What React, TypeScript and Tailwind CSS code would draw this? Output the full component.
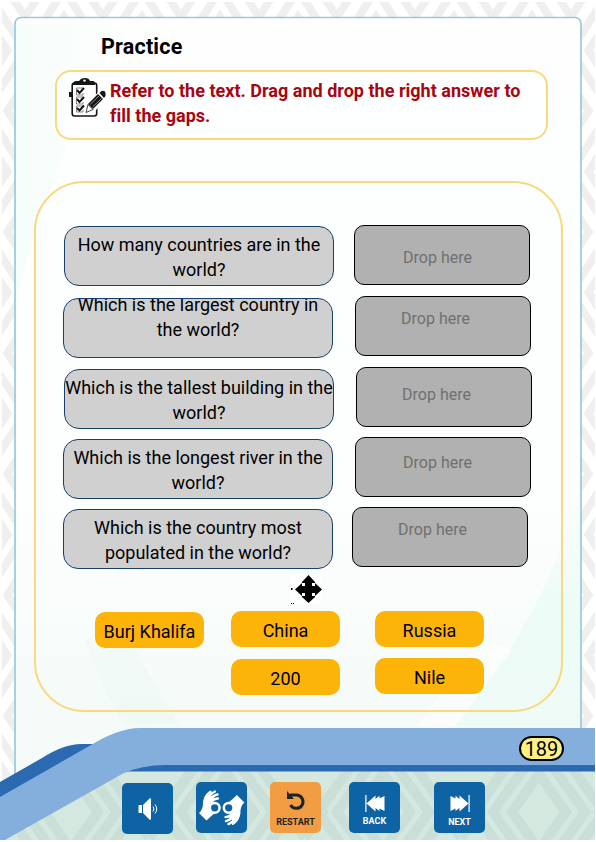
import React from "react";

const questions = [
  { text: ["How many countries are in the", "world?"], box: "ml-[10px] mt-0", pad: "pt-[5px]" },
  { text: ["Which is the largest country in", "the world?"], box: "ml-[9px] mt-3", pad: "-mt-[7px]" },
  { text: ["Which is the tallest building in the", "world?"], box: "ml-[10px] mt-[11px]", pad: "pt-[5px]" },
  { text: ["Which is the longest river in the", "world?"], box: "ml-[9px] mt-[10px]", pad: "pt-[5px]" },
  { text: ["Which is the country most", "populated in the world?"], box: "ml-[9px] mt-[10px]", pad: "pt-[5px]" },
];

const drops = [
  { box: "ml-[2px] mt-0", pad: "pt-[22px] pr-[9px]" },
  { box: "ml-[3px] mt-[11px]", pad: "pt-[12px] pr-[15px]" },
  { box: "ml-[4px] mt-[11px]", pad: "pt-[17px] pr-[15px]" },
  { box: "ml-[3px] mt-[10px]", pad: "pt-[15px] pr-[11px]" },
  { box: "ml-0 mt-[10px]", pad: "pt-[12px] pr-[15px]" },
];

function Backdrop() {
  return (
    <svg className="absolute inset-0" width="596" height="842" viewBox="0 0 596 842">
      <defs>
        <pattern id="weave" x="337" y="-10" width="78" height="121" patternUnits="userSpaceOnUse">
          <g fill="none" stroke="#efefef" strokeWidth="8">
            <path d="M39 0L78 60.5L39 121L0 60.5Z" />
            <path d="M39 27L60.5 60.5L39 94L17.5 60.5Z" />
            <path d="M-21 60.5L0 94L21.5 127M99 60.5L78 94L56.5 127M-21 60.5L0 27L21.5 -6M99 60.5L78 27L56.5 -6" />
          </g>
        </pattern>
        <pattern id="weaveGreen" x="-7" y="752" width="156" height="121" patternUnits="userSpaceOnUse">
          <g fill="none" stroke="#cadfd7" strokeWidth="10">
            <path d="M78 -30L143 60L78 150L13 60Z" />
            <path d="M78 -4L124 60L78 124L32 60Z" />
            <path d="M78 22L105 60L78 98L51 60Z" />
            <path d="M0 34L18 60L0 86M156 34L138 60L156 86" />
          </g>
        </pattern>
        <linearGradient id="page" x1="0" y1="0" x2="0" y2="1">
          <stop offset="0" stopColor="#fefefe" />
          <stop offset="0.6" stopColor="#fdfefe" />
          <stop offset="0.85" stopColor="#f5fbf9" />
          <stop offset="1" stopColor="#f3faf7" />
        </linearGradient>
        <linearGradient id="mint" x1="0" y1="0" x2="0" y2="1">
          <stop offset="0" stopColor="#fbfefd" />
          <stop offset="0.5" stopColor="#edfcf6" />
          <stop offset="1" stopColor="#eefaf6" />
        </linearGradient>
        <linearGradient id="corner" x1="0" y1="0" x2="1" y2="0">
          <stop offset="0" stopColor="#f5fdfa" />
          <stop offset="1" stopColor="#fefefe" />
        </linearGradient>
      </defs>
      <rect width="596" height="842" fill="white" />
      <rect x="2" y="2" width="593" height="800" fill="url(#weave)" />
      <rect x="15" y="17.5" width="566" height="800" rx="6" fill="url(#page)" stroke="#9bc9d4" strokeWidth="1.7" />
      <path d="M16 24H130Q60 130 16 300Z" fill="url(#corner)" />
      <path d="M580 480Q556 590 490 677L455 727H580Z" fill="url(#mint)" />
      <path d="M512 650L455 727H416L480 640Z" fill="white" opacity=".6" />
      <path d="M85 640Q103 690 125 727H180L130 640Z" fill="#eef9f4" opacity=".6" />
      <path d="M0 839L128 768H595V840H0Z" fill="#d4e8e0" />
      <path d="M0 839L128 768H595V840H0Z" fill="url(#weaveGreen)" />
      <path d="M0 782L42 758Q64 744 81 744H150V765L0 807Z" fill="#2b6ab0" />
      <path d="M125 771.5Q145 764 165 764H595V771.5Z" fill="#2b6ab0" />
      <path d="M0 797L91 745Q119 728 140 728H595V765H165Q142 765 123 773.5L5 840H0Z" fill="#84aedc" />
    </svg>
  );
}

function Checklist() {
  return (
    <svg className="mt-[5px] shrink-0" width="37" height="41" viewBox="0 0 37 41">
      <rect x="3.2" y="6" width="24.5" height="33" rx="2.5" fill="white" stroke="#151515" strokeWidth="1.6" />
      <path d="M4 8Q4 4 7 4H10Q12 1 16 1T21 4H24Q26 4 26 8Z" fill="#151515" />
      <circle cx="15.5" cy="3.6" r="1.2" fill="white" />
      <path d="M0 15H3V20H0Z" fill="#151515" />
      <g fill="none" stroke="#151515">
        <path d="M14 11H7.5V18H14V16M14 20H7.5V27H14V25M14 29H7.5V35H14V33" stroke="#888" strokeWidth="1" />
        <path d="M8 13L10.5 16L15 11M8 22L10.5 25L15 20M8 31L10.5 33.5L15 28.5" strokeWidth="2" />
      </g>
      <path d="M17 36L19 27L31 15L36 20L25 34Z" fill="white" stroke="white" strokeWidth="2" />
      <path d="M17 35.5L19 27.5L24 32.5Z" fill="white" stroke="#151515" strokeWidth=".8" />
      <path d="M19 27L29 17L34 22L24 32Z" fill="#151515" />
      <path d="M30.5 16L32.5 14Q36 13 36.5 16V19L35 21Z" fill="#151515" />
      <path d="M21 27.5L30 19M23.5 30L32.5 21.5" stroke="#aaa" strokeWidth=".8" />
    </svg>
  );
}

function Hand({ transform }: { transform?: string }) {
  return (
    <g transform={transform}>
      <path d="M3 31Q7.5 27 7 20Q8 14 11.5 11L20 17L14 22V29Q15 31 19 31Q15 34 10.5 38.5Z" fill="white" />
      <g fill="none" stroke="white" strokeLinecap="round" strokeWidth="2.3">
        <path d="M8.5 20Q9.5 13 14.5 9.8M11 19Q13.5 12 19 9.5M13 20Q16 13.5 21.5 12.5M15 20Q18 16.5 22 16.5" />
        <circle cx="18.7" cy="25.8" r="4.9" strokeWidth="2.5" />
      </g>
    </g>
  );
}

function Answer({ children, className = "" }: { children: React.ReactNode; className?: string }) {
  return (
    <button className={`h-9 w-[109px] shrink-0 whitespace-nowrap rounded-[10px] bg-[#fdb409] text-center text-[18px] leading-[39px] ${className}`}>
      {children}
    </button>
  );
}

function SkipIcon({ flip = false }: { flip?: boolean }) {
  return (
    <svg className={flip ? "-scale-x-100" : ""} width="20" height="17" viewBox="0 0 20 17" fill="white">
      <path d="M.3 0H1.5V17H.3ZM1.5 8.5L10.5 .6V4L14.5 .8V3.5L19.5 1V16L14.5 13.5V16L10.5 13V16.4Z" />
    </svg>
  );
}

export default function App() {
  return (
    <div className="relative h-[842px] w-[596px] overflow-hidden bg-white font-['Roboto','Liberation_Sans',sans-serif] text-black">
      <Backdrop />
      <div className="relative flex h-[842px] flex-col">
        <h1 className="ml-[101px] mt-[33px] h-[37px] text-[21.5px] font-bold leading-[28px] tracking-[0.2px]">Practice</h1>
        <section className="ml-[55px] flex h-[70px] w-[493px] shrink-0 rounded-[16px] border-2 border-[#f8d97d] bg-white/60 pl-3">
          <Checklist />
          <p className="ml-1 mt-[6px] whitespace-nowrap text-[18px] font-bold leading-[25px] tracking-[0.02px] text-[#a80510]">
            Refer to the text. Drag and drop the right answer to
            <br />
            fill the gaps.
          </p>
        </section>
        <main className="ml-[34px] mt-[41px] h-[531px] w-[529px] shrink-0 rounded-[50px] border-2 border-[#f8d97d] px-[18px] pt-[42px]">
          <div className="flex">
            <div className="mt-px w-[298px]">
              {questions.map((q) => (
                <div key={q.text[0]} className={`h-[60px] w-[270px] overflow-hidden rounded-[15px] border border-[#18406c] bg-[#d0d0d0] ${q.box}`}>
                  <div className={`flex flex-col items-center whitespace-nowrap text-[18px] leading-[25px] ${q.pad}`}>
                    {q.text.map((line) => (
                      <span key={line}>{line}</span>
                    ))}
                  </div>
                </div>
              ))}
            </div>
            <div>
              {drops.map((d, i) => (
                <div key={i} className={`h-[60px] w-[176px] rounded-[10px] border border-black bg-[#b1b1b1] text-center text-[16px] leading-[20px] text-[#707070] ${d.box} ${d.pad}`}>
                  Drop here
                </div>
              ))}
            </div>
          </div>
          <svg className="ml-[237px] mt-[5px]" width="31" height="31" viewBox="0 0 31 31">
            <rect width="30" height="30" fill="white" />
            <path d="M0 14H1.5V16H0ZM0 29H1V30H0ZM2 29H3V30H2Z" />
            <path d="M17.5 1L24 8H20V12H24V9L31 15.5L24 22V19H20V23H24L17.5 29L11 23H15V19H11V22L4 15.5L11 9V12H15V8H11Z" />
            <path d="M11 8H24V23H11Z" />
            <path d="M11 9H14V12H11ZM21 9H24V12H21ZM11 19H14V22H11ZM21 19H24V22H21Z" fill="white" />
          </svg>
          <div className="ml-[41px] mt-[6px] flex">
            <Answer className="mt-px">Burj Khalifa</Answer>
            <Answer className="ml-[27px]">China</Answer>
            <Answer className="ml-[35px]">Russia</Answer>
          </div>
          <div className="ml-[177px] mt-[10px] flex">
            <Answer className="mt-px">200</Answer>
            <Answer className="ml-[35px]">Nile</Answer>
          </div>
        </main>
        <div className="ml-[519px] mt-[24px] flex h-[25px] w-[45px] shrink-0 items-center justify-center rounded-full border-2 border-black bg-[#fff082] text-[20px] leading-none">189</div>
        <nav className="ml-[122px] mt-[21px] flex text-[9px] font-bold leading-[10px]">
          <button className="mt-px flex h-[51px] w-[51px] items-center justify-center rounded-[5px] bg-[#0e63a4]">
            <svg width="22" height="22" viewBox="0 0 22 22">
              <path d="M1.5 7H5V15H1.5ZM6 7L13 0Q14 0 14 2V20Q14 22 13 22L6 15Z" fill="white" />
              <path d="M16 8.5Q18 11 16 13.5M18 6.5Q21.5 11 18 15.5" fill="none" stroke="white" />
            </svg>
          </button>
          <button className="ml-[23px] h-[51px] w-[51px] rounded-[5px] bg-[#0e63a4]">
            <svg width="51" height="51" viewBox="0 0 51 51">
              <Hand />
              <Hand transform="rotate(180 25.7 25.8)" />
            </svg>
          </button>
          <button className="ml-[23px] flex h-[51px] w-[51px] flex-col items-center rounded-[5px] bg-[#f29c43] pt-[8px] text-[#1d2427]">
            <svg width="20" height="21" viewBox="0 0 20 21" fill="none" stroke="#1d2427" strokeWidth="3">
              <path d="M4 5H11A6.7 6.7 0 1 1 4.5 15" />
              <path d="M1 1V9H8Z" fill="#1d2427" stroke="none" />
            </svg>
            <span className="mt-[6px]">RESTART</span>
          </button>
          <button className="ml-[28px] flex h-[51px] w-[51px] flex-col items-center rounded-[5px] bg-[#0e63a4] pt-[13px] text-white">
            <SkipIcon />
            <span className="mt-[4px]">BACK</span>
          </button>
          <button className="ml-[34px] flex h-[51px] w-[51px] flex-col items-center rounded-[5px] bg-[#0e63a4] pt-[13px] text-white">
            <SkipIcon flip />
            <span className="mt-[5px]">NEXT</span>
          </button>
        </nav>
      </div>
    </div>
  );
}
